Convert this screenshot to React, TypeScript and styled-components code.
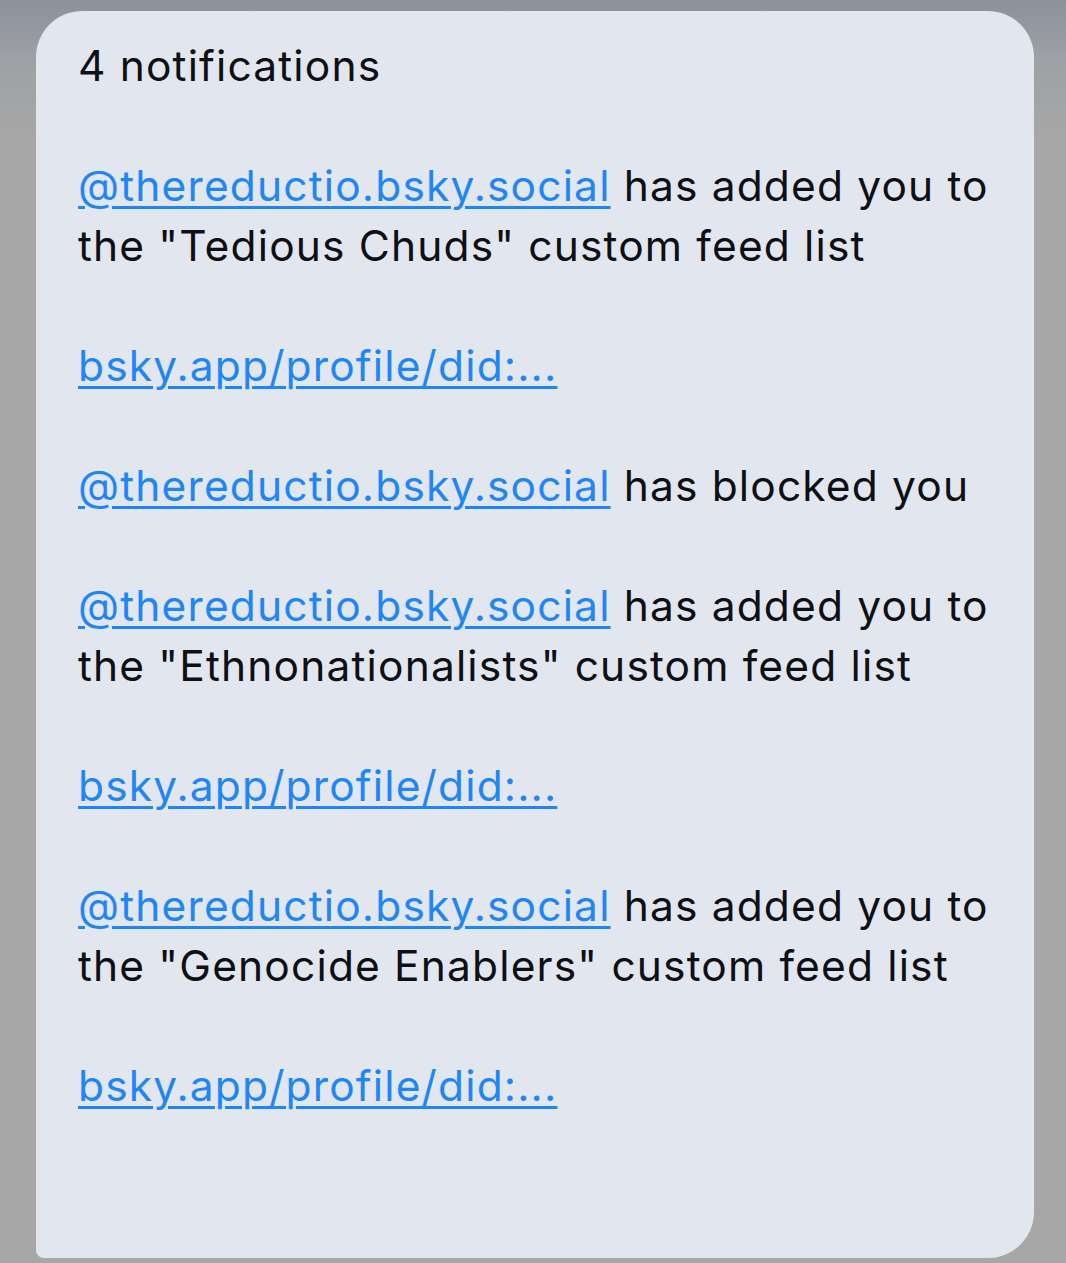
import React from "react";
import styled, { createGlobalStyle } from "styled-components";

const Global = createGlobalStyle`
  html, body { margin: 0; padding: 0; }
  body {
    width: 1066px;
    height: 1263px;
    overflow: hidden;
    background: linear-gradient(180deg, #8a929c 0px, #9ea1a5 60px, #a7a7a7 140px, #a7a7a7 100%);
  }
`;

const Page = styled.div`
  width: 1066px;
  height: 1263px;
  box-sizing: border-box;
  padding: 11px 32px 5px 36px;
  display: flex;
`;

const Card = styled.div`
  flex: 1;
  background: #e2e6ee;
  border-radius: 46px 46px 46px 8px;
  padding: 25px 20px 0 42px;
  box-sizing: border-box;
  font-family: Inter, "Noto Sans", sans-serif;
  font-size: 42.5px;
  line-height: 60px;
  color: #0e1014;
  letter-spacing: 1.15px;
`;

const Header = styled.div`
  margin-bottom: 60px;
`;

const Para = styled.p`
  margin: 0 0 60px 0;
  white-space: nowrap;
`;

const Link = styled.a`
  color: #1f86f7;
  text-decoration: underline;
  text-decoration-thickness: 3px;
  text-underline-offset: 5px;
`;

const items = [
  { kind: "add", list: "Tedious Chuds" },
  { kind: "link" },
  { kind: "block" },
  { kind: "add", list: "Ethnonationalists" },
  { kind: "link" },
  { kind: "add", list: "Genocide Enablers" },
  { kind: "link" },
];

export default function App() {
  return (
    <>
      <Global />
      <Page>
        <Card>
          <Header>4 notifications</Header>
          {items.map((it, i) => {
            if (it.kind === "link") {
              return (
                <Para key={i}>
                  <Link href="#">bsky.app/profile/did:...</Link>
                </Para>
              );
            }
            if (it.kind === "block") {
              return (
                <Para key={i}>
                  <Link href="#">@thereductio.bsky.social</Link> has blocked you
                </Para>
              );
            }
            return (
              <Para key={i}>
                <Link href="#">@thereductio.bsky.social</Link> has added you to
                <br />
                the "{it.list}" custom feed list
              </Para>
            );
          })}
        </Card>
      </Page>
    </>
  );
}
